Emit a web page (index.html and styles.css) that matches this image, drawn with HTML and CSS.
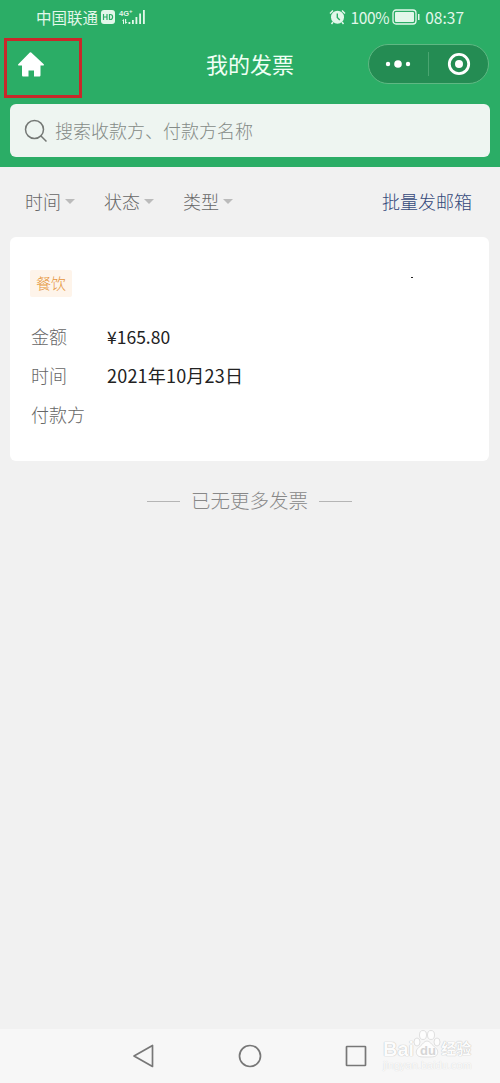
FILE: index.html
```html
<!DOCTYPE html>
<html lang="zh-CN">
<head>
  <meta charset="UTF-8" />
  <meta name="viewport" content="width=device-width, initial-scale=1.0"/>
  <title>我的发票</title>
  <link rel="stylesheet" href="styles.css">
</head>
<body>
  <header class="header">
    <div class="status-bar">
      <div class="status-left">
        <span>中国联通</span>
        <svg class="hd-icon" width="14" height="14" viewBox="0 0 14 14">
          <rect width="14" height="14" rx="3" fill="#e2f7ea"/>
          <path d="M2.500 4v6M6 4v6M2.500 7H6M8.500 4.500v5h.8c1.500 0 2.300-1 2.300-2.500s-.8-2.500-2.300-2.500z" fill="none" stroke="#2bad66" stroke-width="1.200"/>
        </svg>
        <div class="network">
          <span class="network-type">4G<sup>+</sup></span>
          <svg width="27" height="16" viewBox="0 0 27 16" fill="#e2f7ea">
            <path d="M3 12l2-2.200V15H4v-3zM6 10h1.200v3H8.500l-2 2L6 14z"/>
            <rect x="9.500" y="13" width="1.800" height="2"/>
            <rect x="13" y="11" width="1.800" height="4"/>
            <rect x="16.500" y="8" width="1.800" height="7"/>
            <rect x="20.200" y="4.500" width="1.800" height="10.500"/>
            <rect x="24" y="1" width="1.800" height="14"/>
          </svg>
        </div>
      </div>
      <div class="status-right">
        <svg width="17" height="16" viewBox="0 0 17 16">
          <circle cx="8.500" cy="8.200" r="6.500" fill="#e2f7ea"/>
          <path d="M1 4.500L4 1.500M16 4.500l-3-3M4 13l-1.500 2M13 13l1.500 2" stroke="#e2f7ea" stroke-width="1.500"/>
          <path d="M8.300 4.500v4l2.500 2.500" fill="none" stroke="#2bad66" stroke-width="1.400"/>
        </svg>
        <span class="percent">100%</span>
        <svg class="battery" width="29" height="16" viewBox="0 0 29 16">
          <rect x="1" y="1" width="23" height="14" rx="3" fill="none" stroke="#e2f7ea" stroke-width="1.300"/>
          <rect x="3" y="3" width="19" height="10" rx="1" fill="#e2f7ea"/>
          <rect x="26" y="5" width="1.500" height="6" fill="#e2f7ea"/>
        </svg>
        <span class="clock">08:37</span>
      </div>
    </div>

    <div class="nav-bar">
      <a class="home">
        <svg width="28" height="26" viewBox="0 0 28 26">
          <path d="M14.200 1.500L26.500 13c.8.900.5 1.500-.5 1.500H23.500V24c0 1-.5 1.500-1.500 1.500h-5v-6h-5.500v6h-5c-1 0-1.500-.5-1.500-1.500V14.500H2c-1 0-1.300-.6-.5-1.500L12.800 1.500q.7-.6 1.400 0z" fill="#fff"/>
        </svg>
      </a>
      <h1>我的发票</h1>
      <div class="capsule">
        <svg class="capsule-more" width="26" height="10" viewBox="0 0 26 10" fill="#fff">
          <circle cx="3" cy="5" r="2.200"/>
          <circle cx="13" cy="5" r="3.800"/>
          <circle cx="23" cy="5" r="2.200"/>
        </svg>
        <span class="capsule-line"></span>
        <svg class="capsule-close" width="24" height="24" viewBox="0 0 24 24">
          <circle cx="12" cy="12" r="9.700" fill="none" stroke="#fff" stroke-width="2.800"/>
          <circle cx="12" cy="12" r="4" fill="#fff"/>
        </svg>
      </div>
    </div>

    <div class="search">
      <svg width="24" height="24" viewBox="0 0 24 24" fill="none" stroke="#747875" stroke-width="1.500">
        <circle cx="10.500" cy="10.500" r="9"/>
        <path d="M17 17l5.500 5.500"/>
      </svg>
      <span>搜索收款方、付款方名称</span>
    </div>
  </header>

  <main>
    <div class="filters">
      <span class="filter">时间</span>
      <span class="filter">状态</span>
      <span class="filter">类型</span>
      <a class="send-all">批量发邮箱</a>
    </div>

    <section class="card">
      <div class="card-top">
        <span class="tag">餐饮</span>
        <span class="dash"></span>
      </div>
      <dl>
        <dt>金额</dt>
        <dd>¥165.80</dd>
        <dt>时间</dt>
        <dd class="date">2021年10月23日</dd>
        <dt>付款方</dt>
        <dd></dd>
      </dl>
    </section>

    <p class="no-more">已无更多发票</p>
  </main>

  <footer class="system-nav">
    <svg width="24" height="26" viewBox="0 0 24 26">
      <path d="M20.500 2.500v21L2 13z"/>
    </svg>
    <svg width="24" height="26" viewBox="0 0 24 26">
      <circle cx="12" cy="13" r="10.500"/>
    </svg>
    <svg width="24" height="26" viewBox="0 0 24 26">
      <rect x="2.500" y="3.500" width="19" height="19" rx=".5"/>
    </svg>
    <div class="watermark">
      <div class="logo">
        <span class="latin">Bai</span>
        <svg width="28" height="30" viewBox="0 0 28 30">
          <ellipse cx="10" cy="6" rx="3.500" ry="4.500"/>
          <ellipse cx="18" cy="6" rx="3.500" ry="4.500"/>
          <ellipse cx="4" cy="13" rx="3" ry="4"/>
          <ellipse cx="24" cy="13" rx="3" ry="4"/>
          <path d="M14 12c3 0 4 3 6.500 5s5 4 4 7.500-4 3.500-10.500 3.500-9.500 0-10.500-3.500 1.500-5.500 4-7.500S11 12 14 12z"/>
          <text x="7" y="26">du</text>
        </svg>
        <span class="hanzi">经验</span>
      </div>
      <div class="site">jingyan.baidu.com</div>
    </div>
  </footer>

  <!-- highlight around the home button -->
  <div class="highlight"></div>
</body>
</html>
```
FILE: styles.css
```css
* {
  box-sizing: border-box;
}

body {
  margin: 0;
  height: 1083px;
  display: flex;
  flex-direction: column;
  position: relative;
  font-family: "Noto Sans CJK SC", sans-serif;
  font-weight: 300;
  font-size: 18px;
  background-color: #f1f1f1;
  color: #222;
}

svg {
  display: block;
  flex: none;
}

.header {
  height: 167px;
  background-color: #2bad66;
}

/* status bar */
.status-bar {
  height: 34px;
  padding: 0 36px 0 37px;
  display: flex;
  justify-content: space-between;
  color: #e2f7ea;
  font-size: 15.5px;
  font-weight: 400;
  line-height: 33px;
}
.status-left,
.status-right {
  display: flex;
  align-items: center;
}
.status-left {
  margin-left: -1px;
}
.hd-icon {
  margin: 0 4px 0 3px;
}
.network {
  position: relative;
}
.network-type {
  position: absolute;
  left: 0;
  top: 0;
  font-family: "Liberation Sans", sans-serif;
  font-size: 7.5px;
  font-weight: bold;
  line-height: 9px;
}
.network-type sup {
  font-size: 6px;
  line-height: 0;
}
.percent {
  margin: 0 3px 0 4px;
  letter-spacing: -.3px;
}
.battery {
  margin-right: 4px;
}

/* title bar */
.nav-bar {
  height: 70px;
  display: flex;
  justify-content: space-between;
  align-items: center;
  padding: 0 11px 10px 17px;
}
h1 {
  margin: -3px 0 0 87px;
  color: #f0fff5;
  font-size: 22px;
  font-weight: 400;
  line-height: 40px;
}
.capsule {
  width: 121px;
  height: 40px;
  display: flex;
  align-items: center;
  border: 1px solid #5fb883;
  border-radius: 20px;
  background-color: #248c53;
}
.capsule-more {
  margin-left: 16px;
}
.capsule-line {
  width: 1px;
  height: 24px;
  margin: 0 18px 0 17px;
  background-color: #4aa571;
}

.search {
  height: 53px;
  margin: 0 10px;
  padding: 0 14px;
  display: flex;
  align-items: center;
  gap: 7px;
  border-radius: 6px;
  background-color: #eef5f1;
  color: #858b87;
}
.search span {
  padding-bottom: 1px;
}

/* filters */
.filters {
  height: 70px;
  padding: 0 28px 2px 25px;
  display: flex;
  align-items: center;
  color: #666;
}
.filter {
  display: flex;
  align-items: center;
  gap: 4px;
  margin-right: 29px;
}
.filter::after {
  content: "";
  border: 5px solid transparent;
  border-top-color: #bbb;
  border-bottom: none;
}
.send-all {
  margin-left: auto;
  color: #34497a;
}

/* invoice card */
.card {
  height: 224px;
  margin: 0 11px 0 10px;
  padding: 33px 21px 0 20px;
  border-radius: 6px;
  background-color: #fff;
}
.card-top {
  display: flex;
  justify-content: space-between;
}
.tag {
  width: 42px;
  height: 27px;
  border-radius: 2px;
  background-color: #fef4ea;
  color: #e5953a;
  font-size: 15px;
  line-height: 26px;
  text-align: center;
}
.dash {
  width: 2px;
  height: 1px;
  margin: 7px 55px 0 0;
  background-color: #222;
}
dl {
  margin: 20px 0 0;
  display: grid;
  grid-template-columns: 76px 1fr;
  line-height: 39px;
}
dt {
  padding-left: 1px;
  color: #666;
}
dd {
  margin: 0 0 0 1px;
  color: #222;
  font-weight: 400;
  font-size: 17.5px;
}
.date {
  font-size: 18px;
  letter-spacing: .2px;
}

.no-more {
  margin: 25px 1px 0 0;
  display: flex;
  align-items: center;
  justify-content: center;
  gap: 11px;
  color: #888;
  font-size: 19.5px;
  line-height: 28px;
}
.no-more::before,
.no-more::after {
  content: "";
  width: 33px;
  height: 1px;
  margin-top: 2px;
  background-color: #b5b5b5;
}

/* system navigation */
.system-nav {
  height: 54px;
  margin-top: auto;
  padding: 0 132px;
  display: flex;
  align-items: center;
  justify-content: space-between;
  position: relative;
  background-color: #f7f7f7;
}
.system-nav > svg {
  fill: none;
  stroke: #777;
  stroke-width: 1.7;
  stroke-linejoin: round;
}
.watermark {
  position: absolute;
  left: 383px;
  top: 0;
  color: #fcfcfc;
  font-family: "Liberation Sans", "Noto Sans CJK SC", sans-serif;
  text-shadow: 0 0 1px #bbb, 0 0 1px #ccc;
}
.logo {
  display: flex;
  align-items: flex-end;
  height: 30px;
  line-height: 20px;
}
.logo .latin {
  font-size: 20px;
  font-weight: bold;
}
.logo svg {
  margin-left: -1px;
  fill: #fdfdfd;
  stroke: #d8d8d8;
  stroke-width: .8;
}
.logo text {
  fill: #d5d5d5;
  stroke: none;
  font-size: 13px;
  font-weight: bold;
  text-shadow: none;
}
.logo .hanzi {
  font-size: 15px;
  font-weight: bold;
}
.site {
  font-size: 11px;
  line-height: 13px;
  text-shadow: 0 0 1px #ccc;
}

.highlight {
  position: absolute;
  left: 4px;
  top: 38px;
  width: 78px;
  height: 60px;
  border: 3px solid #c8282a;
}
```
